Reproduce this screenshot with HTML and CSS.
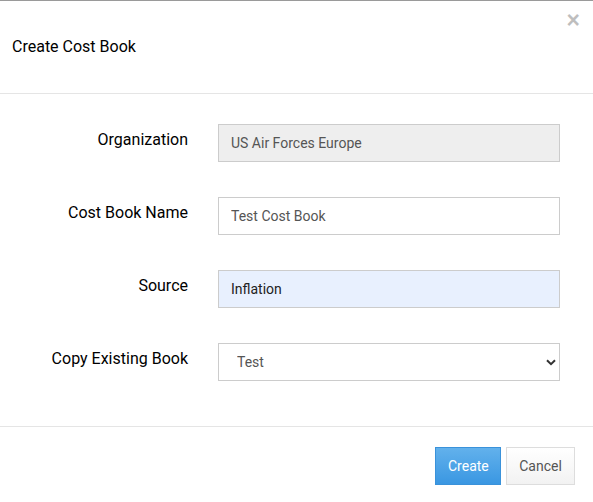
FILE: index.html
```html
<!DOCTYPE html>
<html>
<head>
<meta charset="utf-8">
<link rel="stylesheet" href="styles.css">
</head>
<body>
<div class="modal">
  <div class="modal-header">
    <h4 class="modal-title">Create Cost Book</h4>
    <button class="close" type="button" aria-label="Close">&times;</button>
  </div>
  <div class="modal-body">
    <div class="form-row">
      <label class="control-label">Organization</label>
      <input class="form-control disabled" type="text" value="US Air Forces Europe" readonly>
    </div>
    <div class="form-row">
      <label class="control-label">Cost Book Name</label>
      <input class="form-control" type="text" value="Test Cost Book">
    </div>
    <div class="form-row">
      <label class="control-label">Source</label>
      <input class="form-control autofill" type="text" value="Inflation">
    </div>
    <div class="form-row">
      <label class="control-label">Copy Existing Book</label>
      <div class="select-wrap">
        <select class="form-control select">
          <option>Test</option>
        </select>
        <svg class="chevron" width="10" height="7" viewBox="0 0 10 7"><path d="M1 1.2 L5 5.2 L9 1.2" fill="none" stroke="#333" stroke-width="2"/></svg>
      </div>
    </div>
  </div>
  <div class="modal-footer">
    <button class="btn btn-primary" type="button">Create</button>
    <button class="btn btn-default" type="button">Cancel</button>
  </div>
</div>
</body>
</html>
```
FILE: styles.css
```css
* { box-sizing: border-box; }
html, body { margin: 0; padding: 0; background: #fff; }
body {
  font-family: Roboto, "Liberation Sans", Arial, sans-serif;
  color: #000;
  width: 593px;
  height: 502px;
  overflow: hidden;
}
.modal {
  border-top: 1px solid #9a9a9a;
  position: relative;
  height: 502px;
}
.modal-header {
  height: 93px;
  border-bottom: 1px solid #e5e5e5;
  display: flex;
  align-items: center;
  padding: 0 12px;
}
.modal-title {
  margin: 0;
  font-size: 16px;
  font-weight: 400;
  line-height: 20px;
  color: #000;
}
.close {
  position: absolute;
  top: 8px;
  right: 13px;
  border: 0;
  background: none;
  padding: 0;
  font-size: 23px;
  font-weight: 700;
  line-height: 23px;
  color: #000;
  opacity: 0.25;
  font-family: "Liberation Sans", Arial, sans-serif;
  cursor: pointer;
}
.modal-body {
  padding: 30px 33px 45px 0;
  display: flex;
  flex-direction: column;
  gap: 35px;
}
.form-row {
  display: grid;
  grid-template-columns: 188px 342px;
  column-gap: 30px;
  align-items: start;
}
.control-label {
  text-align: right;
  font-size: 16px;
  font-weight: 400;
  line-height: 20px;
  padding-top: 6px;
  color: #000;
}
.form-control {
  display: block;
  width: 342px;
  height: 38px;
  border: 1px solid #ccc;
  border-radius: 0;
  padding: 0 12px;
  font-family: Roboto, "Liberation Sans", Arial, sans-serif;
  font-size: 14px;
  color: #555;
  background: #fff;
  outline: none;
}
.form-control.disabled { background: #eeeeee; }
.form-control.autofill { background: #e8f0fe; color: #222; }
.select-wrap { position: relative; }
.select {
  appearance: none;
  -webkit-appearance: none;
  padding-left: 18px;
}
.chevron {
  position: absolute;
  right: 4px;
  top: 16px;
  pointer-events: none;
}
.modal-footer {
  border-top: 1px solid #e5e5e5;
  padding: 20px 18px 0 0;
  display: flex;
  justify-content: flex-end;
  gap: 5px;
}
.btn {
  height: 38px;
  padding: 0 12px;
  font-family: Roboto, "Liberation Sans", Arial, sans-serif;
  font-size: 14px;
  border-radius: 0;
  cursor: pointer;
}
.btn-primary {
  width: 66px;
  color: #fff;
  border: 1px solid #3a92da;
  background: linear-gradient(to bottom, #62b1ec 0%, #3a97e2 100%);
}
.btn-default {
  width: 69px;
  color: #555;
  border: 1px solid #ddd;
  background: linear-gradient(to bottom, #ffffff 0%, #f2f2f2 100%);
}
```
